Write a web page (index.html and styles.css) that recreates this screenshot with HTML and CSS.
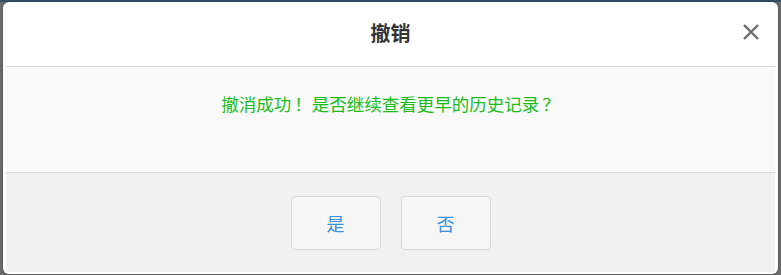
FILE: index.html
```html
<!DOCTYPE html>
<html lang="zh-CN">
<head>
<meta charset="utf-8">
<link rel="stylesheet" href="styles.css">
</head>
<body>
<div class="backdrop">
  <div class="modal">
    <div class="header">
      <span class="title">撤销</span>
      <span class="close" aria-label="关闭">
        <svg width="18" height="18" viewBox="0 0 18 18"><path d="M2 2 L16 16 M16 2 L2 16" stroke="#6b6b6b" stroke-width="2.4" stroke-linecap="butt"/></svg>
      </span>
    </div>
    <div class="content">
      <p class="msg">撤消成功<span class="punct">！</span>是否继续查看更早的历史记录<span class="punct">？</span></p>
    </div>
    <div class="footer">
      <button class="btn">是</button>
      <button class="btn">否</button>
    </div>
  </div>
</div>
</body>
</html>
```
FILE: styles.css
```css
html, body {
  margin: 0;
  padding: 0;
  width: 781px;
  height: 275px;
  overflow: hidden;
  background: #5a6470;
}
.backdrop {
  padding: 2px 3px 1px 3px;
  box-sizing: border-box;
  height: 275px;
  background: linear-gradient(#34506e 0, #34506e 2px, #6d6d6d 2px);
}
.modal {
  background: #fff;
  border-radius: 6px;
  height: 272px;
  box-sizing: border-box;
  padding: 0 3px 2px 3px;
  display: flex;
  flex-direction: column;
  box-shadow: 0 0 3px rgba(0,0,0,0.4);
  font-family: "Noto Sans CJK SC", "Noto Sans", sans-serif;
}
.header {
  height: 64px;
  display: flex;
  align-items: center;
  justify-content: center;
  position: relative;
  border-bottom: 1px solid #d9d9d9;
}
.title {
  font-size: 20px;
  font-weight: bold;
  color: #333;
  margin-bottom: 4px;
}
.close {
  position: absolute;
  right: 15px;
  top: 21px;
  width: 18px;
  height: 18px;
  display: block;
}
.close svg { display: block; }
.content {
  background: #f9f9f9;
  height: 105px;
  border-bottom: 1px solid #d6d6d6;
  display: flex;
  justify-content: center;
}
.msg {
  margin: 24px 0 0 0;
  font-size: 17.5px;
  line-height: 26px;
  color: #19bd19;
  white-space: nowrap;
}
.punct {
  padding-left: 3px;
}
.footer {
  flex: 1;
  background: #f1f1f1;
  display: flex;
  justify-content: center;
  gap: 20px;
  padding-top: 23px;
}
.btn {
  width: 90px;
  height: 54px;
  box-sizing: border-box;
  border: 1px solid #d7d7d7;
  border-radius: 4px;
  background: #f6f6f6;
  color: #3c8fd8;
  font-family: "Noto Sans CJK SC", "Noto Sans", sans-serif;
  font-size: 18px;
  padding: 0;
}
```
